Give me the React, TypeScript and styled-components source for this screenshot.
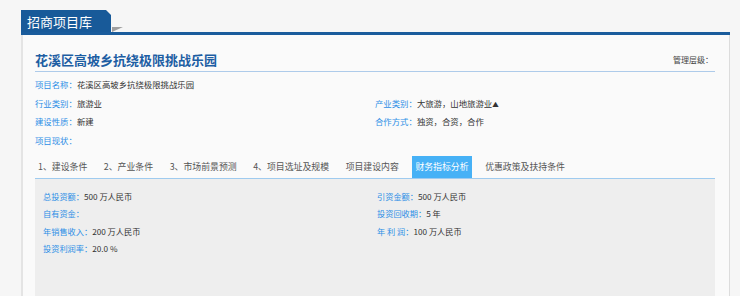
import React from "react";
import styled, { createGlobalStyle } from "styled-components";

const Global = createGlobalStyle`
  html, body { margin: 0; padding: 0; }
  body {
    background: #f6f6f6;
    font-family: "Noto Sans CJK SC", "Noto Sans", sans-serif;
    overflow: hidden;
  }
`;

const Page = styled.div`
  display: flex;
  flex-direction: column;
  height: 296px;
  box-sizing: border-box;
  padding: 10px 10px 0 21px;
`;

const Header = styled.div`
  display: flex;
  align-items: flex-end;
  height: 22px;
  flex-shrink: 0;
  border-bottom: 3px solid #1a5c9c;
`;

const HeaderTab = styled.div`
  width: 90px;
  height: 22px;
  background: #185a99;
  color: #fff;
  font-size: 13px;
  line-height: 23px;
  padding-left: 6px;
  box-sizing: border-box;
  clip-path: polygon(0 0, 85px 0, 90px 5px, 90px 100%, 0 100%);
`;

const Fold = styled.span`
  width: 0;
  height: 0;
  margin-left: 1px;
  border-top: 5px solid #a0a0a0;
  border-right: 11px solid transparent;
`;

const Panel = styled.div`
  flex: 1;
  display: flex;
  flex-direction: column;
  min-height: 0;
  background: #fafafa;
  border-left: 2px solid #e4e4e4;
  border-right: 1px solid #dcdcdc;
  padding: 0 14px 0 12px;
`;

const TitleRow = styled.div`
  display: flex;
  justify-content: space-between;
  align-items: center;
  padding: 13px 0 1px;
  height: 22px;
  flex-shrink: 0;
  border-bottom: 1px solid #aecbea;
`;

const Title = styled.div`
  font-size: 13px;
  font-weight: bold;
  color: #1d5ea3;
`;

const Level = styled.div`
  font-size: 8px;
  color: #444;
  padding-right: 2px;
`;

const InfoGrid = styled.div`
  display: grid;
  grid-template-columns: 340px 1fr;
  margin-top: 3px;
`;

const Row = styled.div<{ $h: number; $size: number }>`
  font-size: ${(p) => p.$size}px;
  line-height: ${(p) => p.$h}px;
  height: ${(p) => p.$h}px;
  color: #333;
  white-space: nowrap;
`;

const Label = styled.span`
  color: #2d8fe6;
`;

const Mark = styled.span`
  font-size: 6.5px;
`;

const Tabs = styled.div`
  display: flex;
  flex-shrink: 0;
  margin-top: 6.6px;
  height: 22px;
  border-bottom: 1px solid #9fcbef;
`;

const Tab = styled.div<{ $active?: boolean }>`
  padding: 0 3px;
  margin-right: 10.5px;
  font-size: 8.9px;
  line-height: 22px;
  color: ${(p) => (p.$active ? "#fff" : "#555")};
  background: ${(p) => (p.$active ? "#46b1f6" : "transparent")};
  white-space: nowrap;
`;

const Content = styled.div`
  flex: 1;
  background: #eeeeee;
  padding: 9px 0 0 8px;
`;

const ContentGrid = styled.div`
  display: grid;
  grid-template-columns: 334px 1fr;
`;

const info: [string, React.ReactNode][] = [
  ["项目名称：", "花溪区高坡乡抗绕极限挑战乐园"],
  ["", ""],
  ["行业类别：", "旅游业"],
  ["产业类别：", <>大旅游，山地旅游业<Mark>▲</Mark></>],
  ["建设性质：", "新建"],
  ["合作方式：", "独资，合资，合作"],
  ["项目现状：", ""],
  ["", ""],
];

const finance: [string, string][] = [
  ["总投资额：", "500 万人民币"],
  ["引资金额：", "500 万人民币"],
  ["自有资金：", ""],
  ["投资回收期：", "5 年"],
  ["年销售收入：", "200 万人民币"],
  ["年 利 润：", "100 万人民币"],
  ["投资利润率：", "20.0 %"],
  ["", ""],
];

const tabs = [
  "1、建设条件",
  "2、产业条件",
  "3、市场前景预测",
  "4、项目选址及规模",
  "项目建设内容",
  "财务指标分析",
  "优惠政策及扶持条件",
];

export default function App() {
  return (
    <>
      <Global />
      <Page>
        <Header>
          <HeaderTab>招商项目库</HeaderTab>
          <Fold />
        </Header>
        <Panel>
          <TitleRow>
            <Title>花溪区高坡乡抗绕极限挑战乐园</Title>
            <Level>管理层级：</Level>
          </TitleRow>
          <InfoGrid>
            {info.map(([l, v], i) => (
              <Row key={i} $h={18.6} $size={8.4}>
                <Label>{l}</Label>
                {v}
              </Row>
            ))}
          </InfoGrid>
          <Tabs>
            {tabs.map((t) => (
              <Tab key={t} $active={t === "财务指标分析"}>
                {t}
              </Tab>
            ))}
          </Tabs>
          <Content>
            <ContentGrid>
              {finance.map(([l, v], i) => (
                <Row key={i} $h={17.4} $size={8.2}>
                  <Label>{l}</Label>
                  {v}
                </Row>
              ))}
            </ContentGrid>
          </Content>
        </Panel>
      </Page>
    </>
  );
}
